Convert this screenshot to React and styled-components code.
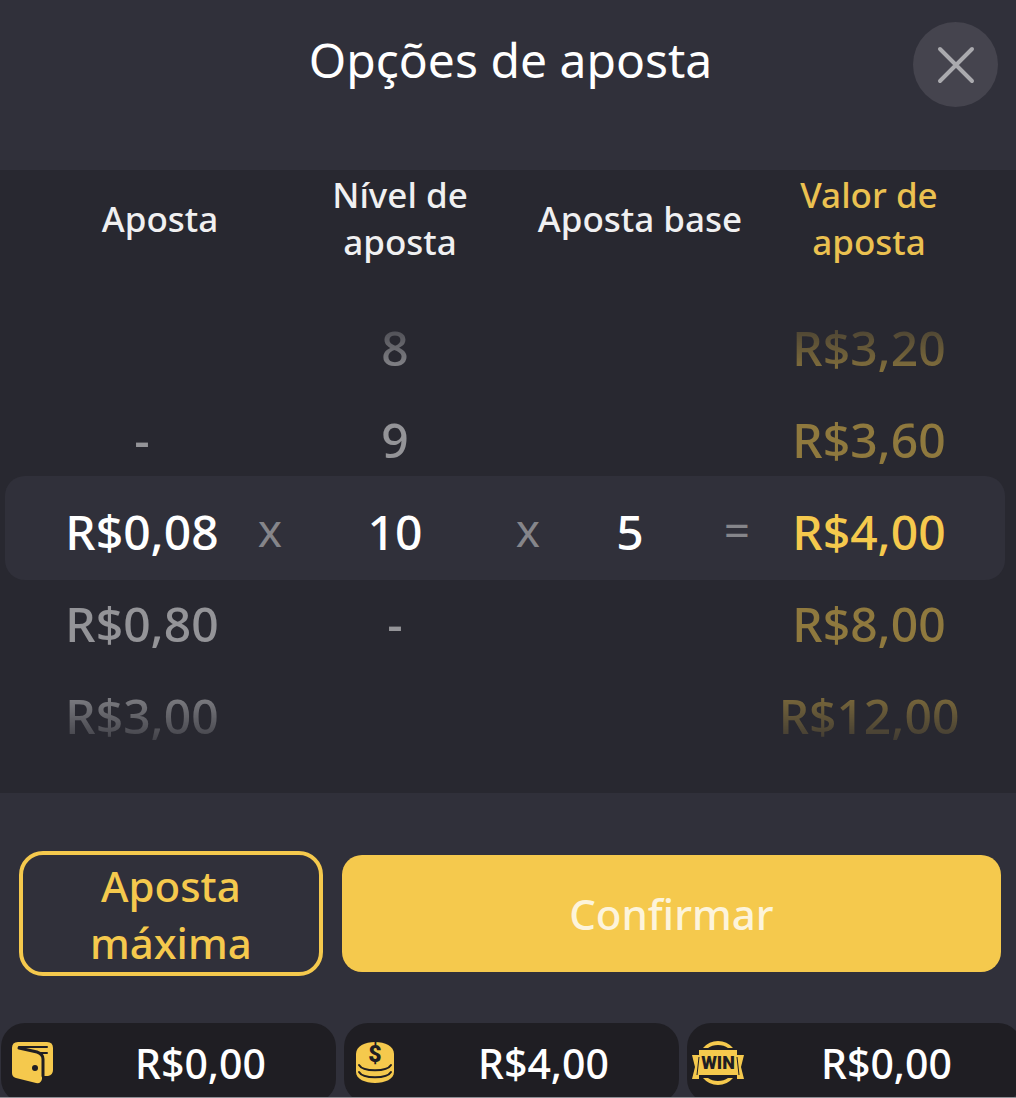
import React from 'react'
import styled, { createGlobalStyle } from 'styled-components'

const GOLD = '#f5c94d'

const ROWS = [
  { bet: '', level: '8', base: '', total: 'R$3,20' },
  { bet: '-', level: '9', base: '', total: 'R$3,60' },
  { bet: 'R$0,08', level: '10', base: '5', total: 'R$4,00', selected: true },
  { bet: 'R$0,80', level: '-', base: '', total: 'R$8,00' },
  { bet: 'R$3,00', level: '', base: '', total: 'R$12,00' }
]

function App() {
  return (
    <>
      <GlobalStyle />
      <Dialog>
        <Header>
          <Title>Opções de aposta</Title>
          <CloseButton type="button" aria-label="Fechar">
            <svg width="40" height="40" viewBox="0 0 40 40" fill="none" stroke="#aaaaae" strokeWidth="4" strokeLinecap="round">
              <path d="M4 4L36 36M36 4L4 36" />
            </svg>
          </CloseButton>
        </Header>

        <Panel>
          <Labels>
            <Label>Aposta</Label>
            <Label>Nível de aposta</Label>
            <Label>Aposta base</Label>
            <Label $gold>Valor de aposta</Label>
          </Labels>
          <Picker>
            {ROWS.map(row => (
              <Row key={row.total} $selected={row.selected}>
                <Value>{row.bet}</Value>
                <Operator>{row.selected && 'x'}</Operator>
                <Value>{row.level}</Value>
                <Operator>{row.selected && 'x'}</Operator>
                <Value>{row.base}</Value>
                <Operator>{row.selected && '='}</Operator>
                <Value $gold>{row.total}</Value>
              </Row>
            ))}
          </Picker>
        </Panel>

        <Actions>
          <MaxButton type="button">Aposta máxima</MaxButton>
          <ConfirmButton type="button">Confirmar</ConfirmButton>
        </Actions>

        <Footer>
          <Stat>
            <WalletIcon />
            <Amount>R$0,00</Amount>
          </Stat>
          <Stat>
            <CoinsIcon />
            <Amount>R$4,00</Amount>
          </Stat>
          <Stat>
            <WinIcon />
            <Amount>R$0,00</Amount>
          </Stat>
        </Footer>
      </Dialog>
    </>
  )
}

function WalletIcon() {
  return (
    <StatIcon viewBox="0 0 60 44">
      <path fill={GOLD} d="M13 1H42Q48 1 48 7V29Q48 34 43 35H39V1V35H37V38Q36 43 31 42L11 37Q7 36 7 32V7Q7 1 13 1Z" />
      <path fill="none" stroke="#1f1e23" strokeWidth="2" strokeLinecap="round" d="M14 6H42M36 12H42" />
      <path fill="none" stroke="#1f1e23" strokeWidth="3" strokeLinecap="round" d="M14 7L32 11Q38 13 38 18V35" />
      <circle cx="30" cy="27" r="3" fill="#1f1e23" />
    </StatIcon>
  )
}

function CoinsIcon() {
  return (
    <StatIcon viewBox="0 0 60 44">
      <path fill={GOLD} d="M8 13C8 5 17 1 27 1S46 5 46 13V31C46 38 37 42 27 42S8 38 8 31Z" />
      <path fill="none" stroke="#1f1e23" strokeWidth="2" strokeLinecap="round" d="M11 24C15 31 39 31 43 24M11 31C15 38 39 38 43 31" />
      <IconText x="27" y="21" fontSize="23">$</IconText>
    </StatIcon>
  )
}

function WinIcon() {
  return (
    <StatIcon viewBox="0 0 60 44">
      <path fill={GOLD} d="M12 7Q18 0 27 0T42 7H37Q33 4 27 4T17 7ZM12 37H17Q21 40 27 40T37 37H42Q36 44 27 44T12 37Z" />
      <path fill={GOLD} d="M8 9H46V14H53L50 26L53 38H46V34H8V38H1L4 26L1 14H8Z" />
      <path fill="none" stroke="#1f1e23" strokeWidth="1" d="M8 16L6 34M46 16L48 34" />
      <IconText x="27" y="28" fontSize="18">WIN</IconText>
    </StatIcon>
  )
}

const GlobalStyle = createGlobalStyle`
  * {
    box-sizing: border-box;
  }

  body {
    margin: 0;
    background: #30303a;
    font-family: 'Noto Sans', 'Open Sans', sans-serif;
  }

  button {
    font: inherit;
    cursor: pointer;
  }
`

const Dialog = styled.main`
  height: 100vh;
  overflow: hidden;
  border-bottom: 1px solid #8f8f95;
  color: #ffffff;
`

const Header = styled.header`
  display: grid;
  grid-template-columns: 1fr 85px;
  align-items: start;
  height: 170px;
  padding: 22px 18px;
`

const Title = styled.h1`
  margin: 0;
  padding-left: 90px;
  font-size: 48px;
  font-weight: 400;
  line-height: 76px;
  text-align: center;
`

const CloseButton = styled.button`
  display: grid;
  place-items: center;
  width: 85px;
  height: 85px;
  padding: 0;
  border: 0;
  border-radius: 50%;
  background: #45444e;
`

const Panel = styled.section`
  padding-bottom: 33px;
  background: #282830;
`

const Labels = styled.div`
  display: grid;
  grid-template-columns: 240fr 240fr 240fr 218fr;
  align-items: center;
  height: 96px;
  margin-bottom: 34px;
  padding: 0 38px 0 40px;
`

const Label = styled.div`
  color: ${props => (props.$gold ? '#ebc150' : '#f0f0f1')};
  font-size: 35px;
  font-weight: 500;
  line-height: 47px;
  text-align: center;
`

const Picker = styled.div`
  padding: 0 11px 0 5px;
  mask-image: linear-gradient(
    transparent,
    #000 80px,
    #000 calc(100% - 80px),
    transparent
  );
`

const Value = styled.span`
  color: ${props => (props.$gold ? GOLD : '#ffffff')};
  font-size: 48px;
  font-weight: 500;
`

const Operator = styled.span`
  padding-bottom: 6px;
  color: #85858a;
  font-size: 46px;
`

const Row = styled.div`
  display: grid;
  grid-template-columns: 200fr 56fr 194fr 72fr 132fr 82fr 182fr;
  align-items: center;
  height: ${props => (props.$selected ? '104px' : '92px')};
  margin: ${props => (props.$selected ? '-8px 0 -4px' : '0')};
  padding: ${props => (props.$selected ? '8px' : '4px')} 45px 0 37px;
  border-radius: 20px;
  background: ${props => (props.$selected ? '#30303a' : 'transparent')};
  line-height: 80px;
  text-align: center;

  ${Value} {
    opacity: ${props => (props.$selected ? 1 : 0.5)};
  }
`

const Actions = styled.div`
  display: grid;
  grid-template-columns: 304fr 660fr;
  align-items: center;
  gap: 19px;
  padding: 58px 15px 47px 19px;
`

const MaxButton = styled.button`
  height: 125px;
  padding: 0 60px;
  border: 4px solid ${GOLD};
  border-radius: 24px;
  background: transparent;
  color: ${GOLD};
  font-size: 42px;
  font-weight: 500;
  line-height: 57px;
`

const ConfirmButton = styled.button`
  height: 117px;
  border: 0;
  border-radius: 20px;
  background: ${GOLD};
  color: #fdf4db;
  font-size: 42px;
  font-weight: 500;
`

const Footer = styled.footer`
  display: grid;
  grid-template-columns: repeat(3, 1fr);
  gap: 8px;
  margin: 0 -6px 0 1px;
`

const Stat = styled.div`
  display: flex;
  align-items: center;
  height: 80px;
  padding-left: 4px;
  border-radius: 24px;
  background: #1f1e23;
`

const StatIcon = styled.svg`
  flex: none;
  width: 60px;
  height: 44px;
  overflow: visible;
`

const IconText = styled.text`
  fill: #1f1e23;
  font-family: Roboto, sans-serif;
  font-weight: 900;
  text-anchor: middle;
`

const Amount = styled.span`
  flex: 1;
  font-size: 41px;
  font-weight: 500;
  text-align: center;
`

export default App
